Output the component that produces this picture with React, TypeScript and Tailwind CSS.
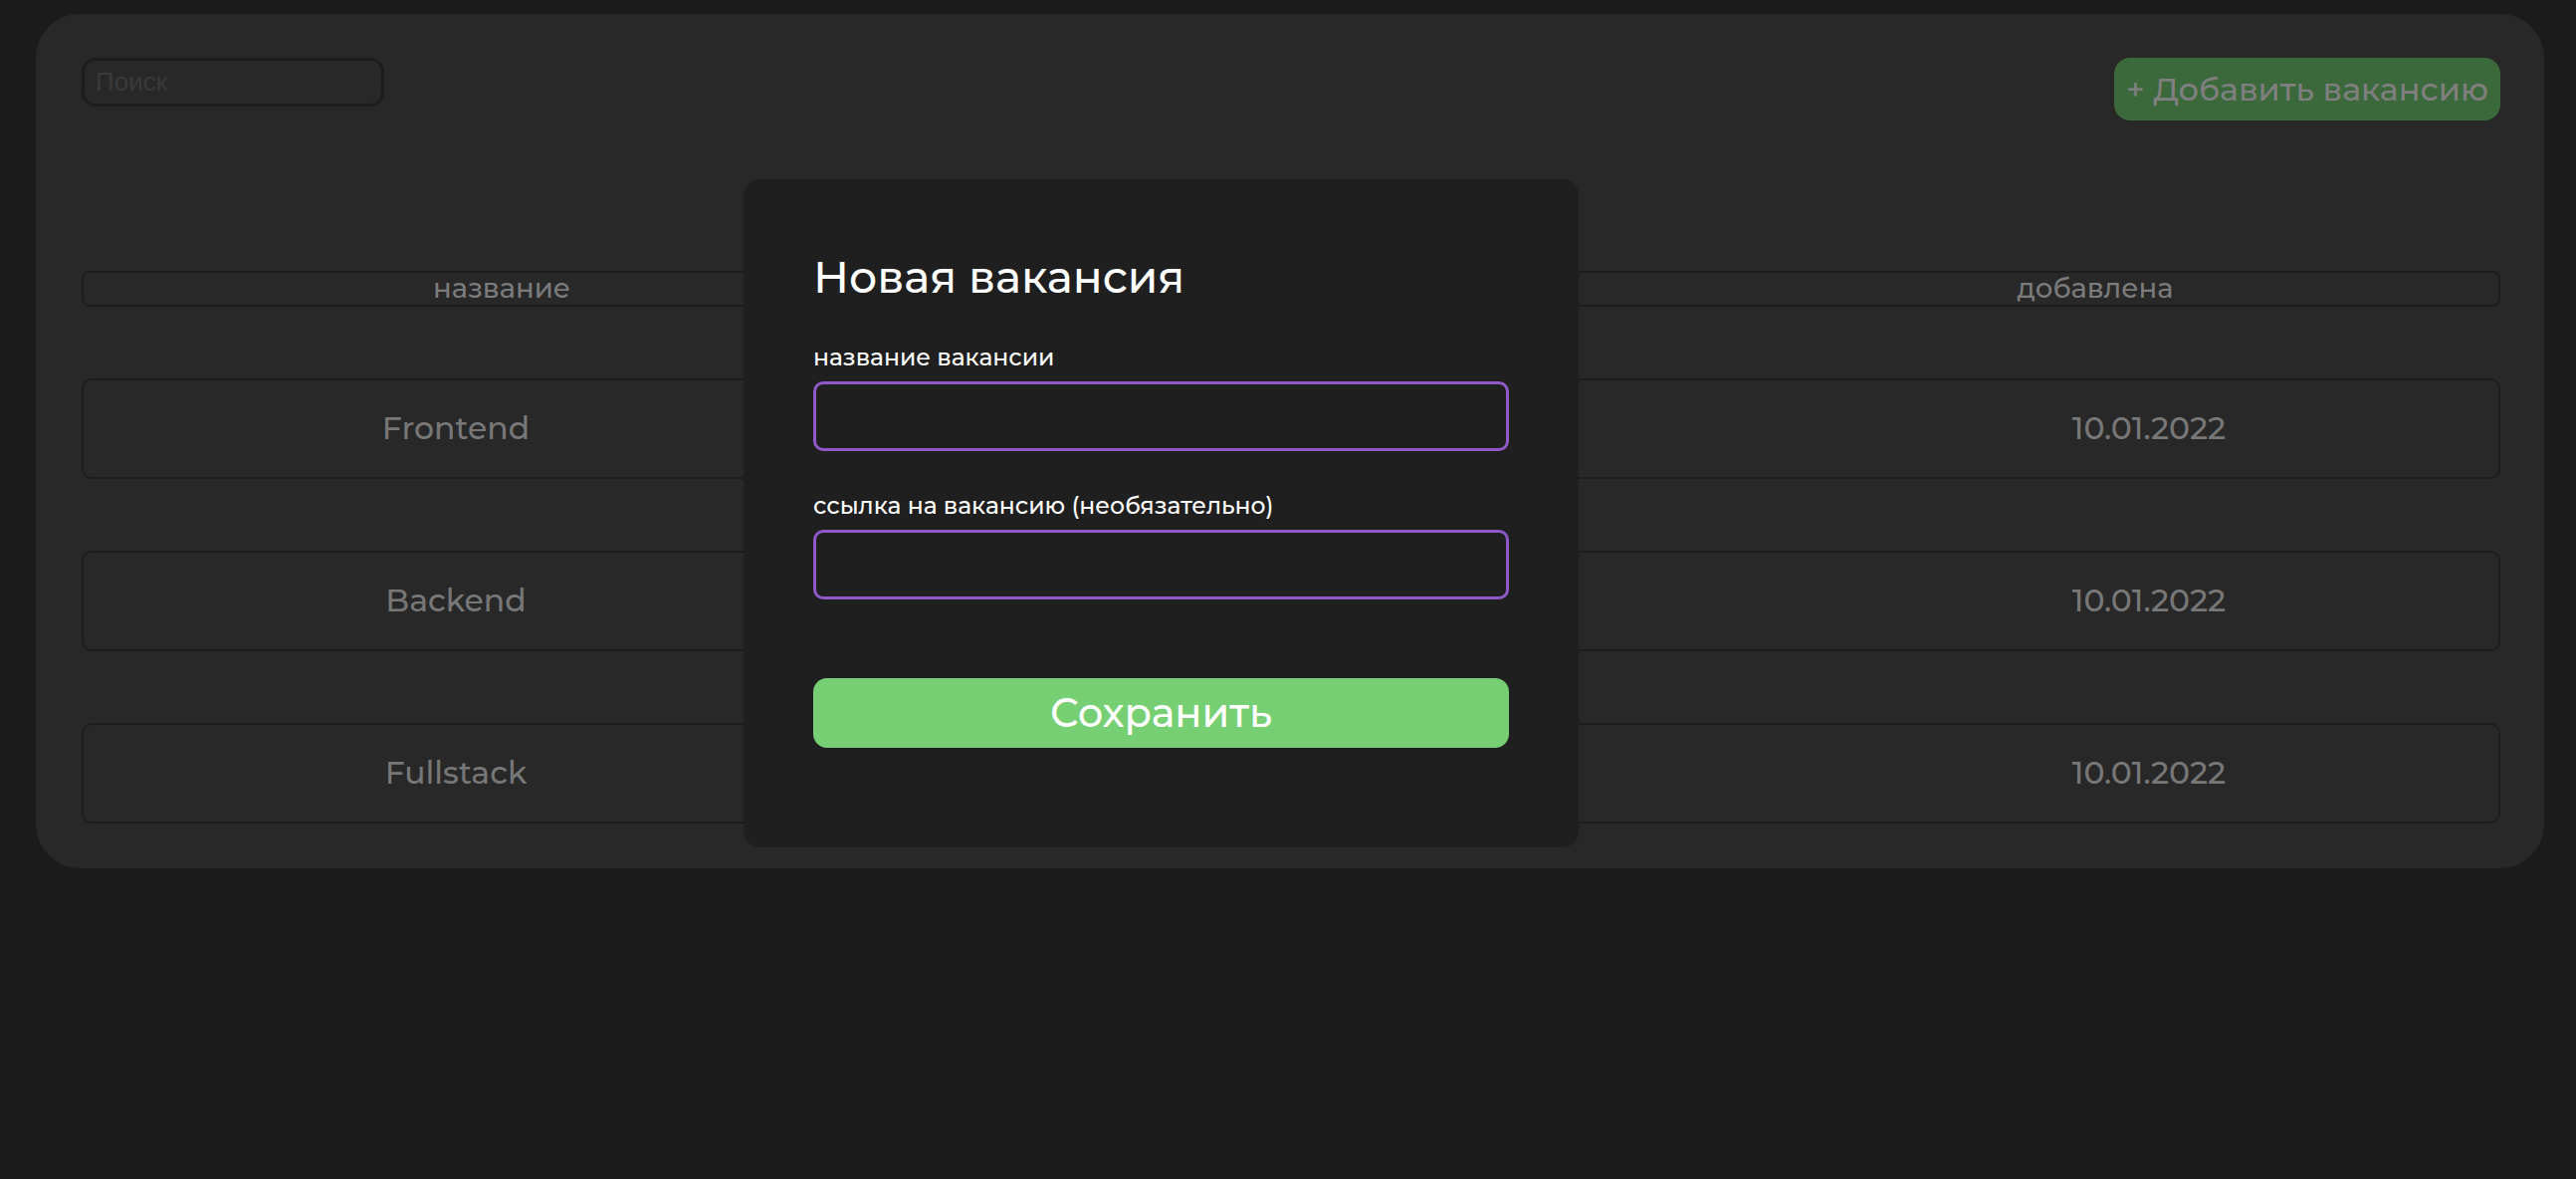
import React from 'react';

const vacancies = [
  { title: 'Frontend', added: '10.01.2022' },
  { title: 'Backend', added: '10.01.2022' },
  { title: 'Fullstack', added: '10.01.2022' },
];

const font = { fontFamily: 'Montserrat, Inter, "Noto Sans", sans-serif' };

export default function App() {
  return (
    <div className="relative w-full min-h-screen bg-[#1b1b1b] pt-[14px] pl-[36px] pr-[32px] font-medium" style={font}>
      {/* Board */}
      <div className="rounded-[44px] bg-[#282828] pl-[46px] pr-[44px] pt-[44px] pb-[45px]">
        <div className="flex items-start justify-between">
          <input
            placeholder="Поиск"
            className="h-[49px] w-[304px] rounded-[14px] border-[3px] border-[#1d1d1d] bg-transparent px-[11px] text-[26px] font-normal text-[#777] outline-none placeholder:text-[#3a3a3a]"
            style={{ fontFamily: '"Liberation Sans", Arial, sans-serif' }}
          />
          <button className="flex h-[63px] w-[388px] items-center justify-center whitespace-nowrap rounded-[16px] bg-[#3b693b] text-[32px] text-[#7f7f7f]">
            + Добавить вакансию
          </button>
        </div>

        {/* Table head */}
        <div className="mt-[151px] grid h-[36px] grid-cols-[840px_1fr_810px] items-center rounded-[8px] border-2 border-[#1d1d1d] text-[27.5px] leading-none text-[#7b7b7b]">
          <div className="text-center">название</div>
          <div />
          <div className="text-center">добавлена</div>
        </div>

        {/* Rows */}
        <div className="mt-[72px] flex flex-col gap-[72px]">
          {vacancies.map((v) => (
            <div
              key={v.title}
              className="grid h-[101px] grid-cols-[748px_1fr_702px] items-center rounded-[10px] border-2 border-[#1d1d1d] text-[31.5px] text-[#777]"
            >
              <div className="text-center">{v.title}</div>
              <div />
              <div className="text-center">{v.added}</div>
            </div>
          ))}
        </div>
      </div>

      {/* Modal */}
      <div className="absolute left-[747px] top-[180px] w-[839px] rounded-[16px] bg-[#1f1f1f] px-[70px] pt-[70px] pb-[100px]">
        <h2 className="text-[44px] leading-[56px] text-white">Новая вакансия</h2>

        <label className="mt-[37px] block text-[23.5px] leading-[32px] text-white">название вакансии</label>
        <input className="mt-[8px] block h-[70px] w-full rounded-[10px] border-[3px] border-[#8f59ca] bg-transparent outline-none" />

        <label className="mt-[39px] block text-[23.5px] leading-[32px] text-white">ссылка на вакансию (необязательно)</label>
        <input className="mt-[8px] block h-[70px] w-full rounded-[10px] border-[3px] border-[#8f59ca] bg-transparent outline-none" />

        <button className="mt-[79px] flex h-[70px] w-full items-center justify-center rounded-[14px] bg-[#76cf72] text-[40px] text-white">
          Сохранить
        </button>
      </div>
    </div>
  );
}
